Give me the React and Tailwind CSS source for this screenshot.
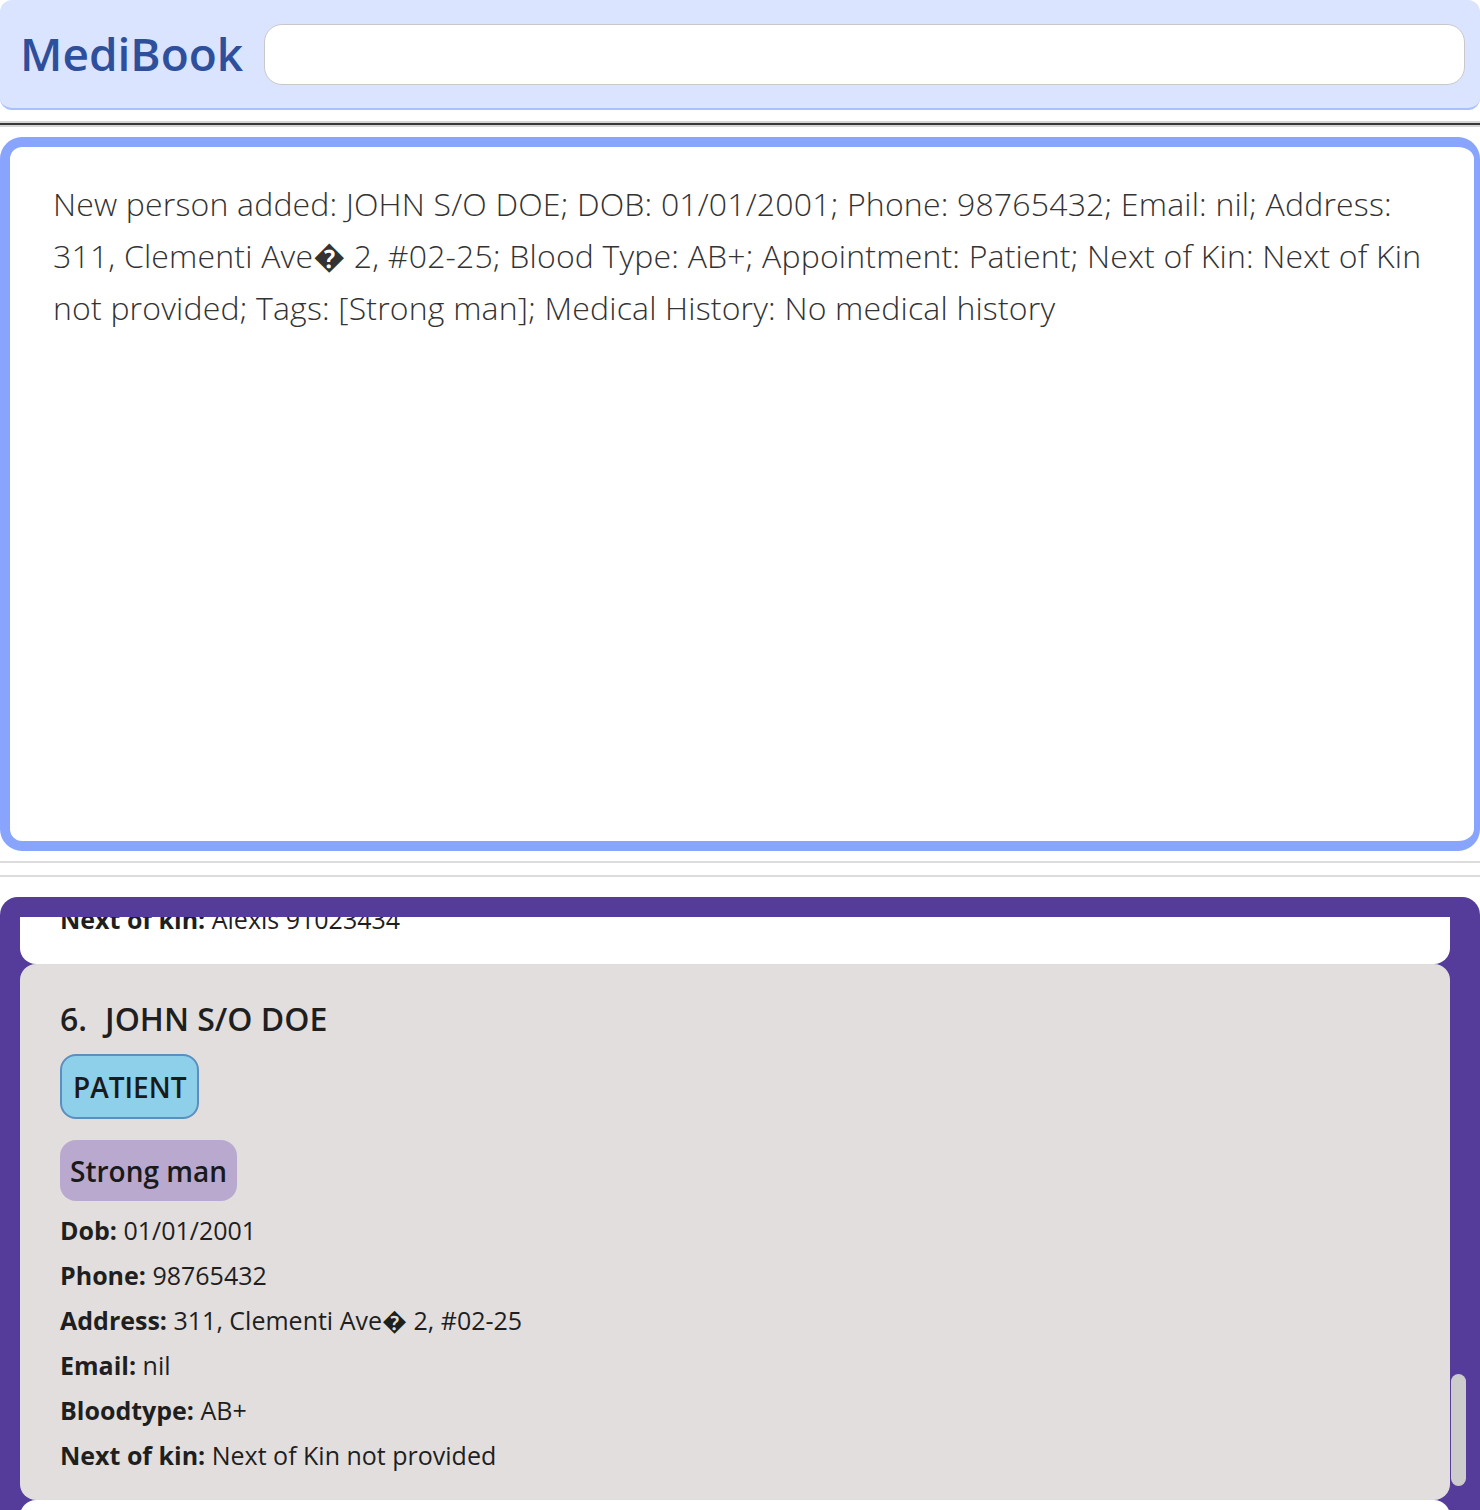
import React from 'react';

const resultLines = [
  'New person added: JOHN S/O DOE; DOB: 01/01/2001; Phone: 98765432; Email: nil; Address:',
  '311, Clementi Ave\uFFFD 2, #02-25; Blood Type: AB+; Appointment: Patient; Next of Kin: Next of Kin',
  'not provided; Tags: [Strong man]; Medical History: No medical history',
];

const fields = [
  ['Dob:', '01/01/2001'],
  ['Phone:', '98765432'],
  ['Address:', '311, Clementi Ave\uFFFD 2, #02-25'],
  ['Email:', 'nil'],
  ['Bloodtype:', 'AB+'],
  ['Next of kin:', 'Next of Kin not provided'],
];

const Field = ({ label, value }) => (
  <div className="h-[45px] leading-[45px] text-[25px] text-[#1f1f1f] whitespace-nowrap">
    <span className="font-bold">{label}</span> {value}
  </div>
);

export default function App() {
  return (
    <div
      className="w-[1480px] h-[1510px] overflow-hidden bg-white flex flex-col"
      style={{ fontFamily: '"Open Sans", "Noto Sans", "DejaVu Sans", sans-serif' }}
    >
      {/* Header */}
      <div className="h-[110px] shrink-0 bg-[#dbe4fe] border-b-2 border-[#a9c1fb] rounded-xl flex items-center pl-[20px] pr-[15px] gap-[21px]">
        <div className="text-[46px] font-semibold text-[#2e4f9c] leading-none pb-[2px]">MediBook</div>
        <div className="flex-1 h-[61px] bg-white border border-[#c8c8c8] rounded-[18px]" />
      </div>

      {/* Separator */}
      <div className="mt-[11px] shrink-0">
        <div className="h-[2px] bg-[#d6d6d6]" />
        <div className="h-[2px] bg-[#383838]" />
        <div className="h-[2px] bg-[#d6d6d6]" />
      </div>

      {/* Result display */}
      <div className="mt-[10px] h-[714px] shrink-0 border-[#88a4fc] border-t-[10px] border-b-[10px] border-l-[10px] border-r-[6px] rounded-[22px] bg-white pl-[43px] pt-[31px]">
        {resultLines.map((line) => (
          <div key={line} className="text-[32px] font-light leading-[52px] tracking-[0.18px] text-[#333333] whitespace-nowrap">
            {line}
          </div>
        ))}
      </div>

      {/* Split lines */}
      <div className="mt-[10px] h-[2px] shrink-0 bg-[#dcdcdc]" />
      <div className="mt-[12px] h-[2px] shrink-0 bg-[#dcdcdc]" />

      {/* Person list */}
      <div className="relative mt-[20px] flex-1 bg-[#553c9a] rounded-t-[18px] pt-[20px] pl-[20px] pr-[30px] flex flex-col overflow-hidden">
        <div className="flex-1 overflow-hidden flex flex-col">
          <div className="bg-white rounded-b-[16px] -mt-[20px] pl-[40px] pb-[22px] shrink-0">
            <Field label="Next of kin:" value="Alexis 91023434" />
          </div>
          <div className="bg-[#e2dede] rounded-[16px] pl-[40px] pt-[35px] pb-[22px] shrink-0">
            <div className="flex gap-[18px] text-[32px] font-semibold leading-[40px] text-[#1f1f1f]">
              <span>6.</span>
              <span>JOHN S/O DOE</span>
            </div>
            <div className="mt-[15px] flex">
              <div className="h-[65px] px-[11px] flex items-center bg-[#8ecfea] border-2 border-[#5b8fc0] rounded-[16px] text-[28px] font-semibold text-[#1a1a1a]">
                PATIENT
              </div>
            </div>
            <div className="mt-[21px] flex">
              <div className="h-[61px] px-[10px] flex items-center bg-[#b9a9cf] rounded-[16px] text-[28px] font-semibold text-[#1a1a1a]">
                Strong man
              </div>
            </div>
            <div className="mt-[7px]">
              {fields.map(([l, v]) => (
                <Field key={l} label={l} value={v} />
              ))}
            </div>
          </div>
          <div className="bg-white rounded-t-[16px] h-[40px] shrink-0" />
        </div>
        <div className="absolute right-[14px] top-[477px] w-[15px] h-[112px] rounded-full bg-[#cccccc]" />
      </div>
    </div>
  );
}
